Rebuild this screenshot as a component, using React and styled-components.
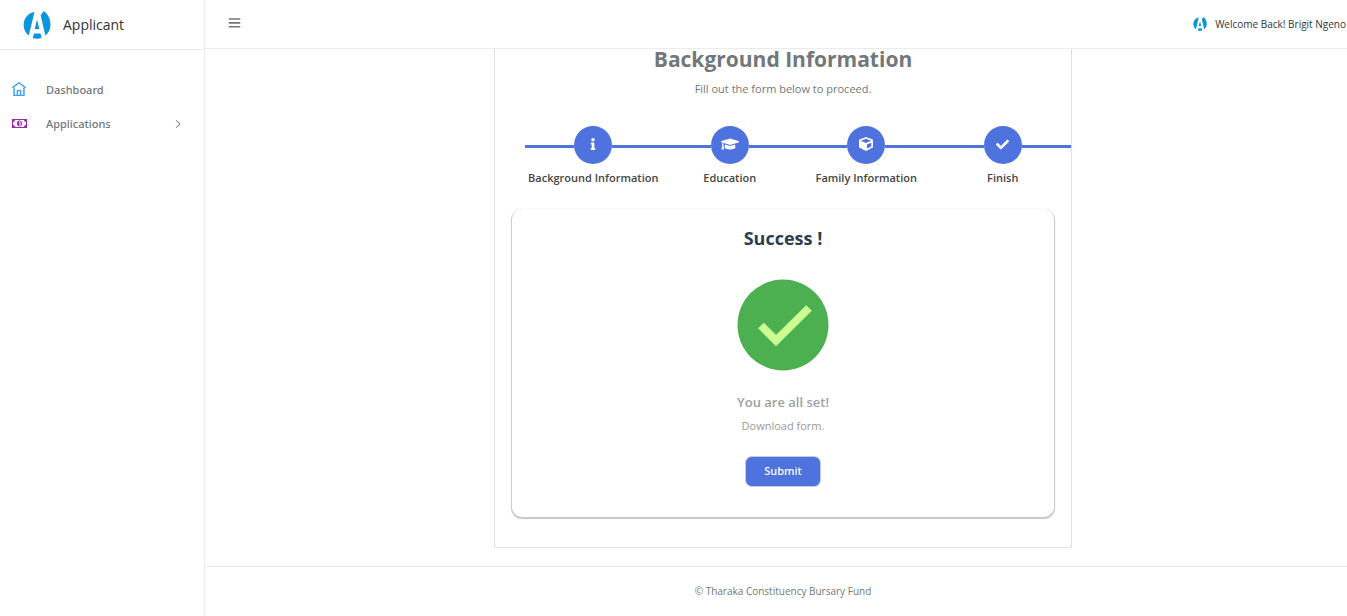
import React from "react";
import styled, { createGlobalStyle } from "styled-components";
import { TfiHome, TfiMenu, TfiAngleRight } from "react-icons/tfi";
import { FaInfo, FaGraduationCap, FaCube, FaCheck } from "react-icons/fa";

const mediumFont = `"Noto Sans", "Open Sans", sans-serif`;

const GlobalStyle = createGlobalStyle`
  *, *::before, *::after { box-sizing: border-box; }
  body {
    margin: 0;
    background: #fff;
    color: #72777a;
    font-family: "Open Sans", "Noto Sans", sans-serif;
    font-size: 11px;
    line-height: 16px;
  }
  h1, h2, h3, p, ul, ol { margin: 0; padding: 0; }
  ul, ol { list-style: none; }
  a { color: inherit; text-decoration: none; }
`;

const Shell = styled.div`
  display: grid;
  grid-template-columns: 205px minmax(0, 1fr);
  min-height: 100vh;
  overflow: hidden;
`;

const Sidebar = styled.aside`
  border-right: 1px solid #e9eaec;
`;

const Brand = styled.a`
  display: flex;
  align-items: center;
  gap: 12px;
  height: 50px;
  padding-left: 23px;
  border-bottom: 1px solid #ebebeb;
  color: #313435;
  font-size: 14px;
  font-weight: 500;
`;

const Menu = styled.ul`
  padding-top: 23px;
`;

const MenuLink = styled.a`
  display: grid;
  grid-template-columns: 16px 1fr 8px;
  column-gap: 18px;
  align-items: center;
  height: 34px;
  padding: 0 22px 0 12px;
  font-family: ${mediumFont};
  font-weight: 500;

  svg:first-child {
    color: ${(p) => p.$accent};
    stroke-width: 0.5px;
    margin-bottom: 2px;
  }
`;

const Page = styled.div`
  display: flex;
  flex-direction: column;
  width: calc(100% + 14px);
`;

const TopBar = styled.header`
  display: flex;
  align-items: center;
  justify-content: space-between;
  height: 49px;
  padding: 0 15px 4px 23px;
  border-bottom: 1px solid #ebebeb;
`;

const ToggleButton = styled.button`
  display: flex;
  padding: 0;
  border: 0;
  background: none;
  color: #72777a;
`;

const Account = styled.a`
  display: flex;
  align-items: center;
  gap: 8px;
  padding-top: 3px;
  color: #313435;
  font-size: 10px;
`;

const Main = styled.main`
  display: flex;
  flex: 1;
  justify-content: center;
  padding-bottom: 18px;
`;

const Card = styled.section`
  width: 50%;
  padding-bottom: 28px;
  border: 1px solid #dedfe0;
  border-top: 0;
  border-radius: 0 0 3px 3px;
  text-align: center;
`;

const Title = styled.h1`
  font-size: 21px;
  line-height: 20px;
  font-weight: 700;
`;

const Lead = styled.p`
  margin-top: 12px;
`;

const Steps = styled.ol`
  display: grid;
  grid-template-columns: repeat(4, 1fr);
  margin: 29px 0 23px;
  padding-left: 30px;
`;

const Step = styled.li`
  color: #454545;
  font-weight: 600;
`;

const StepTrack = styled.div`
  display: flex;
  align-items: center;
  margin-bottom: 6px;

  &::before, &::after {
    content: "";
    flex: 1;
    height: 3px;
    margin-top: 3px;
    background: #4e73df;
  }
`;

const StepDot = styled.span`
  display: flex;
  align-items: center;
  justify-content: center;
  width: 38px;
  height: 38px;
  padding-bottom: 2px;
  border-radius: 50%;
  background: #4e73df;
  color: #fff;
`;

const Result = styled.div`
  display: flex;
  flex-direction: column;
  align-items: center;
  margin: 0 17px;
  padding: 17px 16px 30px;
  border-radius: 10px;
  box-shadow: 0 1px 1px 1px rgba(0, 0, 0, 0.22);
`;

const ResultTitle = styled.h2`
  color: #2c3e50;
  font-size: 18px;
  line-height: 24px;
  font-weight: 700;
`;

const SuccessMark = styled.svg`
  width: 92px;
  height: 92px;
  margin: 29px 0 21px;
`;

const ResultNote = styled.h3`
  color: #a0a0a0;
  font-size: 13px;
  line-height: 20px;
  font-weight: 600;
`;

const ResultHint = styled.p`
  margin: 6px 0 22px;
  color: #999;
`;

const SubmitButton = styled.button`
  height: 31px;
  padding: 0 18px 2px;
  border: 1px solid #c4cbe0;
  border-radius: 7px;
  background: #4e73df;
  color: #fff;
  font: inherit;
  font-family: ${mediumFont};
  font-weight: 500;
`;

const Footer = styled.footer`
  height: 50px;
  padding-top: 16px;
  border-top: 1px solid #ebebeb;
  font-size: 10px;
  text-align: center;
`;

const Logo = ({ size }) => (
  <svg width={size} height={size} viewBox="0 0 28 28" aria-hidden="true">
    <g fill="#0b96da">
      <path d="M11.500 1C5 2 .6 7.500.6 14c0 4.300 2 8 5.200 10.500z" />
      <path d="M20.500 0C25 3 27.500 8 27.500 14c0 4.300-2 8-5.200 10.500L17.700 4.500z" />
      <path d="M14 8.500l2.400 9.500h-4.800z" />
      <path d="M11 22.500h6.500l1 4.500c-3 1-6 1-8.800 0z" />
    </g>
  </svg>
);

const Banknote = () => (
  <svg width="15" height="9" viewBox="0 0 15 9" aria-hidden="true">
    <path fill="#9c27b0" fillRule="evenodd" d="M0 0h15v9H0zM3 1a2 2 0 0 1-2 2v3a2 2 0 0 1 2 2h9a2 2 0 0 1 2-2V3a2 2 0 0 1-2-2z" />
    <path fill="#9c27b0" fillRule="evenodd" d="M7.500 1.500c1.500 0 2.500 1.300 2.500 3s-1 3-2.500 3S5 6.200 5 4.500s1-3 2.500-3zM7 2.500v1h.500v2H7v1h2v-1h-.500v-3z" />
  </svg>
);

const steps = [
  { label: "Background Information", Icon: FaInfo, size: 12 },
  { label: "Education", Icon: FaGraduationCap, size: 18 },
  { label: "Family Information", Icon: FaCube, size: 14 },
  { label: "Finish", Icon: FaCheck, size: 13 },
];

export default function App() {
  return (
    <>
      <GlobalStyle />
      <Shell>
        <Sidebar>
          <Brand href="#"><Logo size={28} />Applicant</Brand>
          <nav>
            <Menu>
              <li><MenuLink href="#" $accent="#2196f3"><TfiHome size={14} />Dashboard</MenuLink></li>
              <li><MenuLink href="#" $accent="#9c27b0"><Banknote />Applications<TfiAngleRight size={8} strokeWidth={1} /></MenuLink></li>
            </Menu>
          </nav>
        </Sidebar>
        <Page>
          <TopBar>
            <ToggleButton aria-label="Toggle menu"><TfiMenu size={13} /></ToggleButton>
            <Account href="#"><Logo size={14} />Welcome Back! Brigit Ngeno</Account>
          </TopBar>
          <Main>
            <Card>
              <Title>Background Information</Title>
              <Lead>Fill out the form below to proceed.</Lead>
              <Steps>
                {steps.map(({ label, Icon, size }) => (
                  <Step key={label}>
                    <StepTrack><StepDot><Icon size={size} /></StepDot></StepTrack>
                    {label}
                  </Step>
                ))}
              </Steps>
              <Result>
                <ResultTitle>Success !</ResultTitle>
                <SuccessMark viewBox="0 0 92 92" aria-hidden="true">
                  <circle cx="46" cy="46" r="45.500" fill="#4caf50" />
                  <path d="M24 46.500L39 61.500L72 29" fill="none" stroke="#ccff90" strokeWidth="8" />
                </SuccessMark>
                <ResultNote>You are all set!</ResultNote>
                <ResultHint>Download form.</ResultHint>
                <SubmitButton type="button">Submit</SubmitButton>
              </Result>
            </Card>
          </Main>
          <Footer>© Tharaka Constituency Bursary Fund</Footer>
        </Page>
      </Shell>
    </>
  );
}
